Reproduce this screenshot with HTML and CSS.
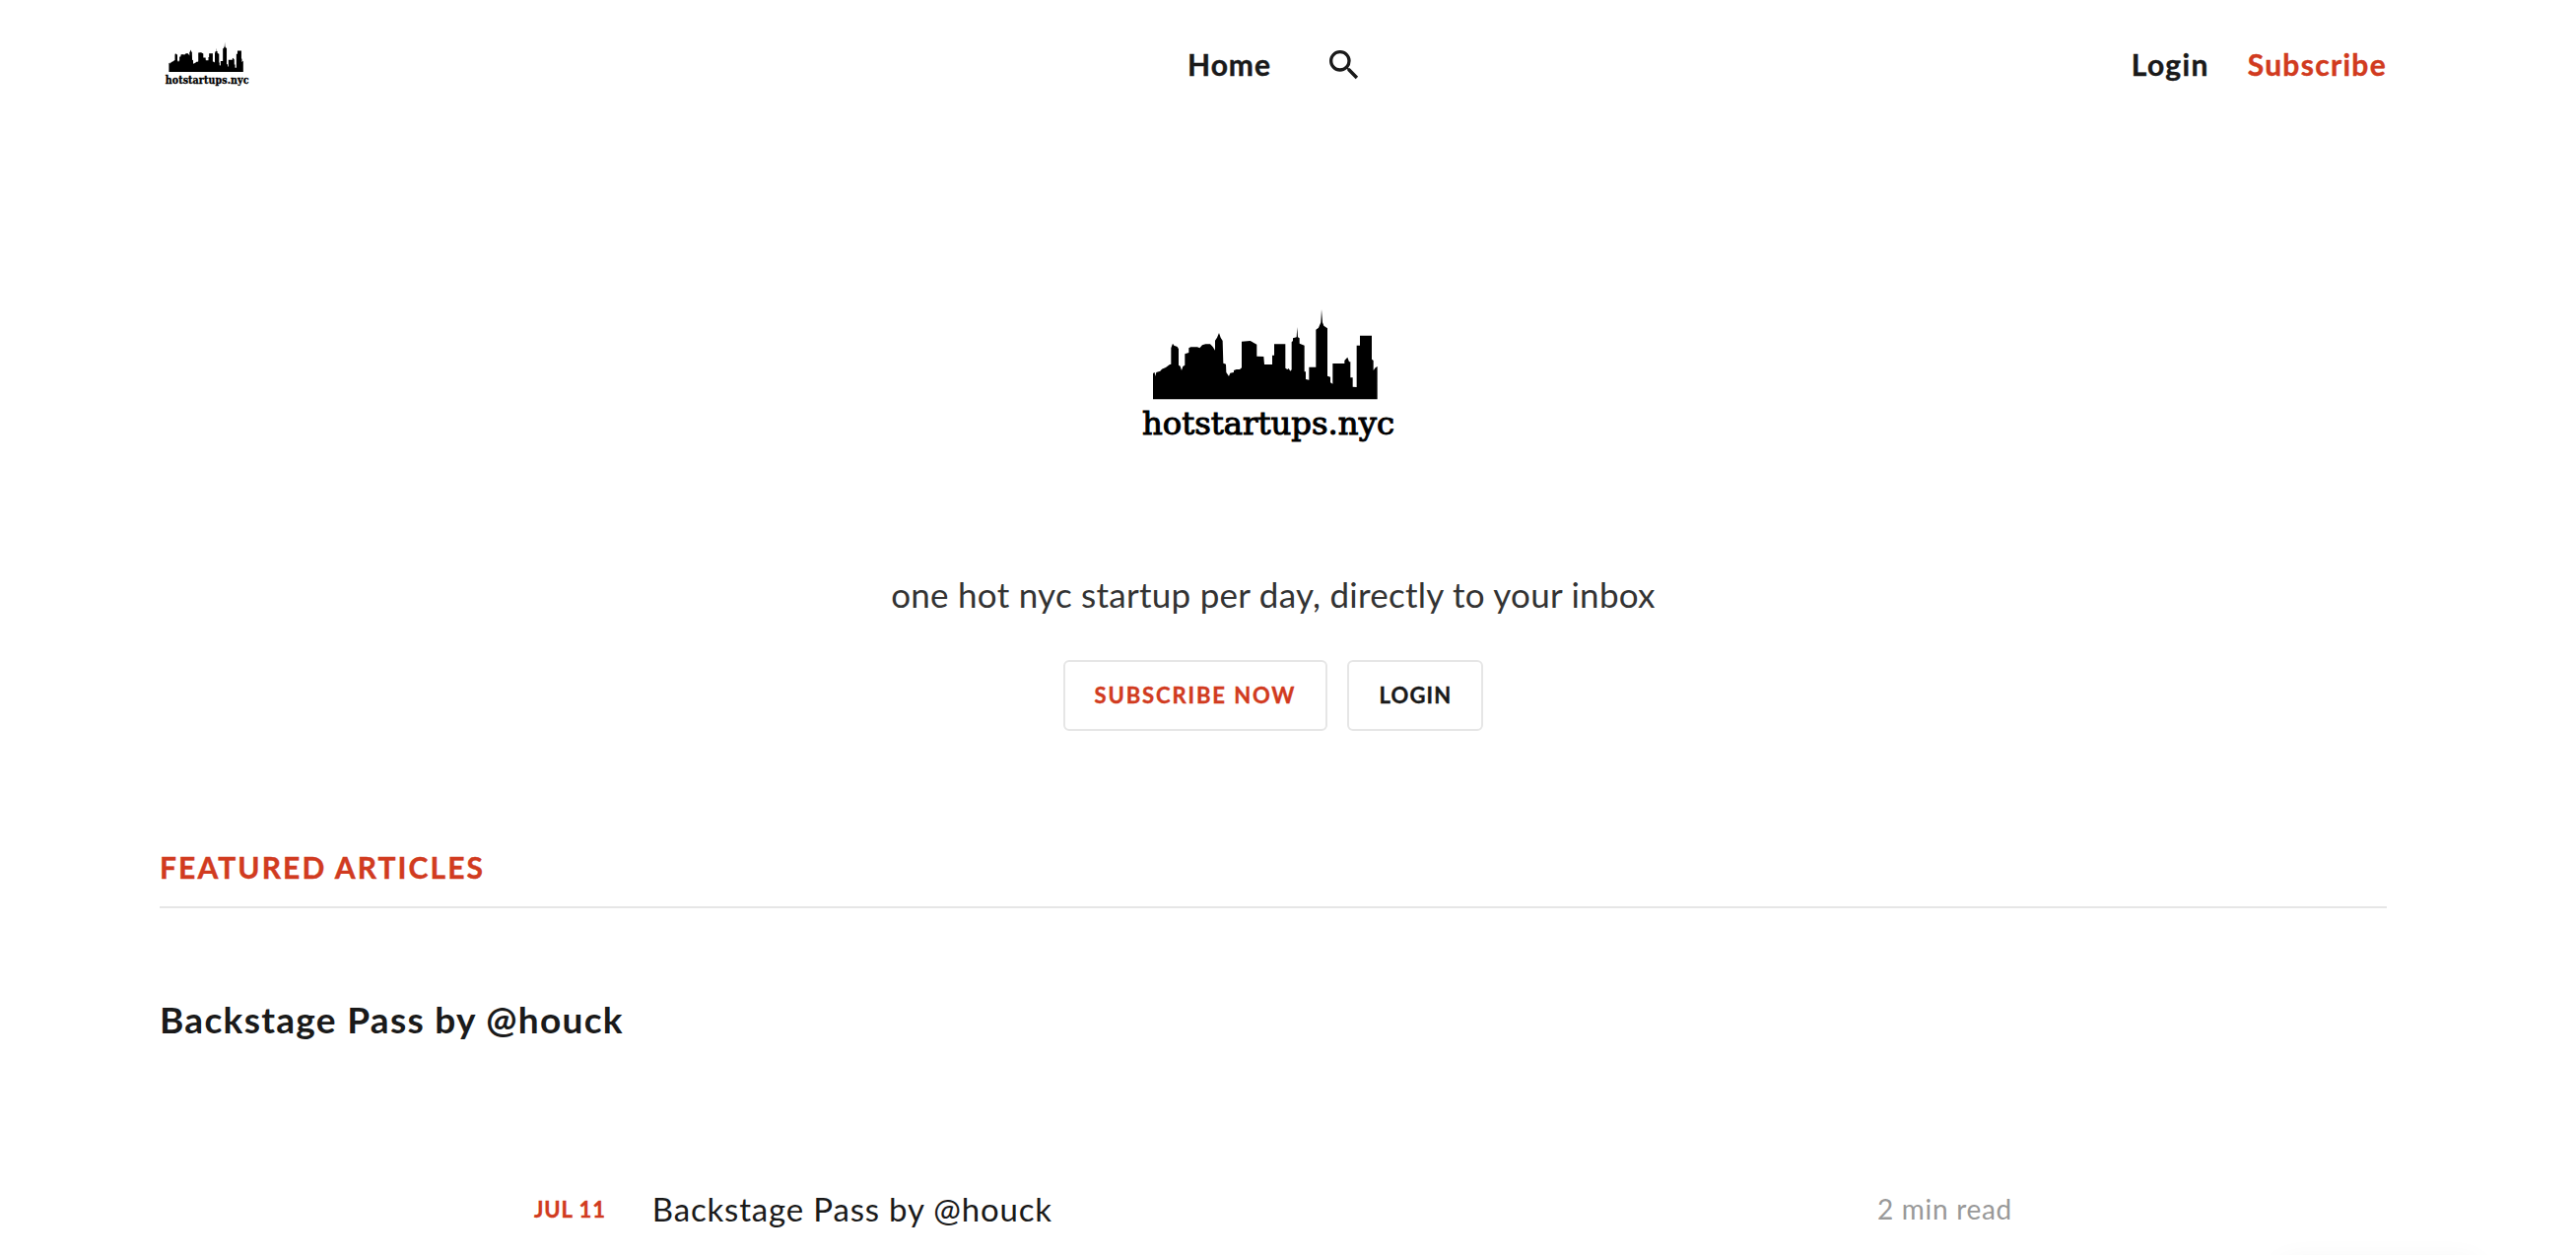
FILE: index.html
```html
<!DOCTYPE html>
<html lang="en">
<head>
    <meta charset="UTF-8">
    <meta name="viewport" content="width=device-width, initial-scale=1.0">
    <title>hotstartups.nyc</title>
    <link rel="stylesheet" href="styles.css">
</head>
<body>
    <!-- logo, used in the header and the hero -->
    <svg class="sprite" aria-hidden="true">
        <symbol id="logo" viewBox="0 0 870 480">
            <path d="M90 316V237L95 234L97 246L100 234L112 230L117 224L129 219L140 211L145 209V160L150 146L154 152L164 156L168 163V212L173 215L177 228L181 216L187 212V178L199 174V160L205 157H225L232 160L240 151L250 148H264L272 156L279 167V137L285 128L291 114L296 128L302 138L304 206L312 209L313 234L321 246L325 236L336 234V228L344 225H354L360 220V140L386 138L406 149V185L427 186L429 210H453V182H459V148H493V221L499 225L503 222L508 230L512 226V142L516 138V130L527 127L529 96L531 127L536 130V146L551 152V232H555V255L565 257V218H586V104L594 98L601 82L603 42L606 82L610 92L621 100V245L630 248V265L637 269V207H673V198L682 188L687 202H691V250H698V278L710 279V152H720V122H756V194L761 198V228L767 220L773 216V316Z"/>
            <text x="57" y="422" textLength="768" lengthAdjust="spacingAndGlyphs">hotstartups.nyc</text>
        </symbol>
    </svg>

    <header class="header">
        <a class="header-logo" href="#"><svg><use href="#logo"/></svg></a>
        <nav class="header-nav">
            <a class="home" href="#">Home</a>
            <svg class="icon-search" viewBox="0 0 24 24"><path d="M15.5 14h-.79l-.28-.27A6.471 6.471 0 0 0 16 9.5 6.5 6.5 0 1 0 9.5 16c1.61 0 3.09-.59 4.23-1.57l.27.28v.79l5 4.99L20.49 19l-4.99-5zm-6 0C7.01 14 5 11.99 5 9.5S7.01 5 9.5 5 14 7.01 14 9.5 11.99 14 9.5 14z"/></svg>
        </nav>
        <div class="header-user">
            <a class="login" href="#">Login</a>
            <a class="subscribe" href="#">Subscribe</a>
        </div>
    </header>

    <section class="hero">
        <svg class="hero-logo"><use href="#logo"/></svg>
        <p class="hero-text">one hot nyc startup per day, directly to your inbox</p>
        <div class="hero-actions">
            <a class="btn btn-primary" href="#">Subscribe now</a>
            <a class="btn" href="#">Login</a>
        </div>
    </section>

    <main class="content">
        <h2 class="section-title">Featured articles</h2>
        <h3 class="featured-title">Backstage Pass by @houck</h3>
        <article class="post">
            <time class="post-date">Jul 11</time>
            <a class="post-title" href="#">Backstage Pass by @houck</a>
            <span class="post-length">2 min read</span>
        </article>
    </main>

    <div class="popup"></div>
</body>
</html>
```
FILE: styles.css
```css
* {
    box-sizing: border-box;
}
body {
    margin: 0;
    width: 2584px;
    height: 1274px;
    overflow: hidden;
    background: #fff;
    color: #1a1a1a;
    font-family: Lato, "Open Sans", sans-serif;
}
a {
    color: inherit;
    text-decoration: none;
}
.sprite {
    position: absolute;
    width: 0;
    height: 0;
}
#logo text {
    font-family: "DejaVu Serif", serif;
    font-size: 94px;
    stroke: #000;
    stroke-width: 3px;
}
.header {
    display: grid;
    grid-template-columns: 1fr auto 1fr;
    align-items: center;
    height: 132px;
    padding: 0 162px;
    font-size: 30px;
    font-weight: 700;
    letter-spacing: 1.3px;
}
.header a {
    padding-bottom: 3px;
}
.header a,
.btn,
.section-title,
.post-date {
    -webkit-text-stroke: 0.4px currentColor;
}
.header-logo svg {
    display: block;
    width: 97px;
    height: 53px;
    margin-left: -1px;
}
.header-nav {
    display: flex;
    align-items: center;
    gap: 54px;
    padding-left: 5px;
}
.home {
    letter-spacing: 1px;
}
.icon-search {
    width: 40px;
    height: 40px;
    fill: #1a1a1a;
}
.header-user {
    display: flex;
    justify-content: flex-end;
    gap: 39px;
}
.subscribe,
.btn-primary {
    color: #d13b20;
}
.hero {
    display: flex;
    flex-direction: column;
    align-items: center;
    padding-top: 168px;
}
.hero-logo {
    width: 290px;
    height: 160px;
    margin-right: 14px;
}
.hero-text {
    margin: 121px 0 0;
    font-size: 35px;
    line-height: 44px;
    letter-spacing: 0.27px;
    color: #333;
}
.hero-actions {
    display: flex;
    gap: 20px;
    margin-top: 45px;
}
.btn {
    height: 72px;
    padding: 0 30px;
    border: 2px solid #e6e6e6;
    border-radius: 6px;
    font-size: 22px;
    font-weight: 700;
    line-height: 68px;
    letter-spacing: 1.2px;
    text-transform: uppercase;
}
.btn-primary {
    letter-spacing: 1.9px;
}
.content {
    padding: 0 162px;
}
.section-title {
    margin: 118px 0 0;
    height: 62px;
    border-bottom: 2px solid #e6e6e6;
    color: #d13b20;
    font-size: 30px;
    line-height: 41px;
    letter-spacing: 2.1px;
    text-transform: uppercase;
}
.featured-title {
    margin: 90px 0 0;
    font-size: 37px;
    line-height: 46px;
    letter-spacing: 1.3px;
}
.post {
    display: flex;
    align-items: center;
    width: 1500px;
    margin: 149px 0 0 380px;
}
.post-date {
    color: #d13b20;
    font-size: 22px;
    font-weight: 700;
    letter-spacing: 0.9px;
    text-transform: uppercase;
}
.post-title {
    margin-left: 47px;
    font-size: 33px;
    letter-spacing: 0.82px;
}
.post-length {
    margin-left: auto;
    color: #999;
    font-size: 28px;
    letter-spacing: 0.7px;
}
/* peeks in from below the fold, only its shadow shows */
.popup {
    position: fixed;
    top: 1282px;
    left: 2314px;
    width: 200px;
    height: 60px;
    border-radius: 8px;
    box-shadow: 0 0 30px rgba(0, 0, 0, 0.06);
}
```
